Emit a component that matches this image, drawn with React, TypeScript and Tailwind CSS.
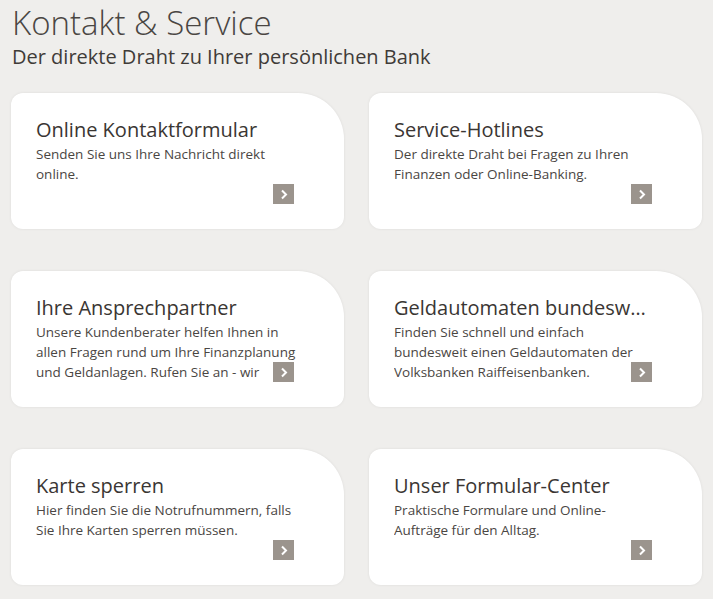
const cards = [
  {
    title: 'Online Kontaktformular',
    text: 'Senden Sie uns Ihre Nachricht direkt online.',
  },
  {
    title: 'Service-Hotlines',
    text: 'Der direkte Draht bei Fragen zu Ihren Finanzen oder Online-Banking.',
  },
  {
    title: 'Ihre Ansprechpartner',
    text: 'Unsere Kundenberater helfen Ihnen in allen Fragen rund um Ihre Finanzplanung und Geldanlagen. Rufen Sie an - wir beraten Sie gerne.',
  },
  {
    title: 'Geldautomaten bundesweit finden',
    text: 'Finden Sie schnell und einfach bundesweit einen Geldautomaten der Volksbanken Raiffeisenbanken.',
  },
  {
    title: 'Karte sperren',
    text: 'Hier finden Sie die Notrufnummern, falls Sie Ihre Karten sperren müssen.',
  },
  {
    title: 'Unser Formular-Center',
    text: 'Praktische Formulare und Online-Aufträge für den Alltag.',
  },
];

function ArrowBox() {
  return (
    <span className="absolute right-[50px] bottom-[25px] flex h-[20px] w-[21px] items-center justify-center bg-[#9b948d]">
      <svg width="8" height="11" viewBox="0 0 8 11" fill="none">
        <path d="M2 1.5 L6 5.5 L2 9.5" stroke="#ffffff" strokeWidth="2" />
      </svg>
    </span>
  );
}

export default function App() {
  return (
    <div
      className="min-h-[599px] w-[713px] overflow-hidden bg-[#efeeec] px-[11px] pt-[3px]"
      style={{ fontFamily: "'Open Sans', 'Noto Sans', sans-serif" }}
    >
      <h1 className="pl-[1px] text-[33px] leading-[40px] font-light text-[#4a4643]">Kontakt &amp; Service</h1>
      <p className="pl-[1px] text-[20px] leading-[28px] text-[#3f3b38]">Der direkte Draht zu Ihrer persönlichen Bank</p>

      <div className="mt-[22px] grid grid-cols-2 gap-x-[25px] gap-y-[42px]">
        {cards.map((c) => (
          <a
            key={c.title}
            href="#"
            className="relative block h-[136px] rounded-[12px] rounded-tr-[46px] bg-white pt-[23px] pr-[46px] pl-[25px] shadow-[0_0_3px_rgba(0,0,0,0.08)]"
          >
            <h2 className="truncate pr-[4px] text-[20px] leading-[28px] text-[#3a3633]">{c.title}</h2>
            <p className="h-[60px] overflow-hidden text-[13.5px] leading-[20px] text-[#4a4643]">{c.text}</p>
            <ArrowBox />
          </a>
        ))}
      </div>
    </div>
  );
}
